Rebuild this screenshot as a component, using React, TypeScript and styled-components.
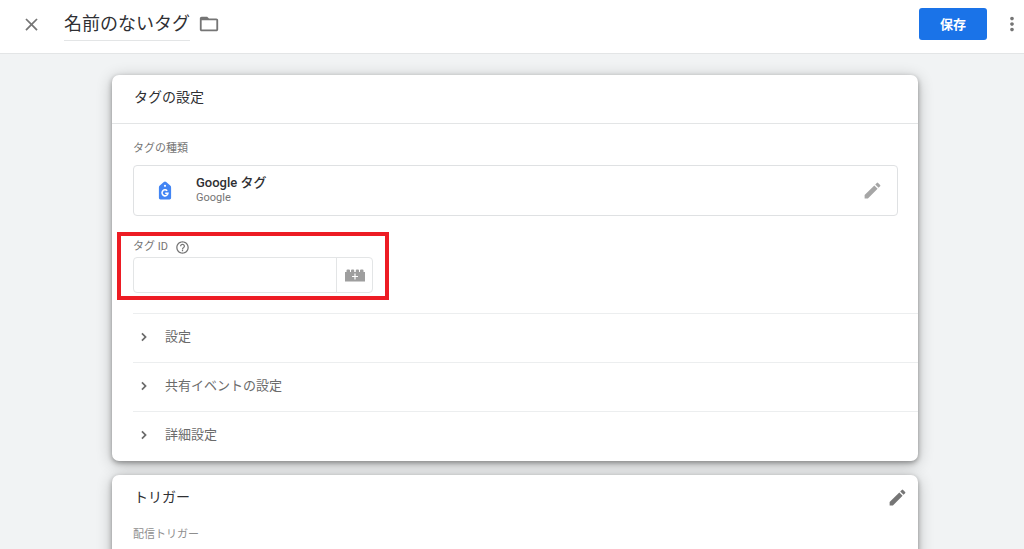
import React from "react";
import styled, { createGlobalStyle } from "styled-components";

const GlobalStyle = createGlobalStyle`
  *, *::before, *::after { box-sizing: border-box; }
  body {
    margin: 0;
    background: #f1f3f4;
    color: #2f3033;
    font-family: Roboto, "Noto Sans CJK JP", sans-serif;
    overflow: hidden;
  }
  h2, p { margin: 0; font-weight: 400; }
  button { font-family: inherit; cursor: pointer; }
  svg { display: block; }
`;

const TopBar = styled.header`
  display: flex;
  align-items: center;
  height: 54px;
  padding: 0 1px 5px 21px;
  background: #fff;
  border-bottom: 1px solid #e3e5e6;
`;

const IconButton = styled.button<{ $tone?: string }>`
  display: flex;
  flex: none;
  padding: 0;
  border: 0;
  background: none;
  color: ${(p) => p.$tone ?? "#757575"};
`;

const TitleInput = styled.input`
  width: 126px;
  height: 34px;
  margin: 0 8px 0 22px;
  padding: 0 0 3px;
  border: 0;
  border-bottom: 1px solid #e3e5e6;
  background: none;
  color: #2f3033;
  font: 400 18px/28px Roboto, "Noto Sans CJK JP", sans-serif;
  outline: none;
`;

const SaveButton = styled.button`
  width: 68px;
  height: 32px;
  margin: 0 14px 0 auto;
  padding: 0 0 2px;
  border: 0;
  border-radius: 3px;
  background: #1a73e8;
  color: #fff;
  font-size: 13px;
  font-weight: 700;
`;

const Main = styled.main`
  display: flex;
  flex-direction: column;
  gap: 14px;
  padding: 21px 106px 0 112px;
`;

const Card = styled.section`
  border-radius: 7px;
  background: #fff;
  box-shadow: 0 2px 5px rgba(0, 0, 0, 0.34), 0 3px 16px rgba(0, 0, 0, 0.24);
`;

const CardHeader = styled.header<{ $divided?: boolean }>`
  display: flex;
  align-items: center;
  justify-content: space-between;
  height: ${(p) => (p.$divided ? 49 : 44)}px;
  padding: ${(p) => (p.$divided ? "0 10px 4px 22px" : "0 10px 0 22px")};
  border-bottom: ${(p) => (p.$divided ? "1px solid #e3e5e6" : "0")};
`;

const CardTitle = styled.h2`
  font-size: 14px;
  line-height: 20px;
`;

const CardBody = styled.div`
  padding: 17px 0 1px 21px;
`;

const Caption = styled.p<{ $pale?: boolean }>`
  font-size: 11px;
  line-height: 16px;
  color: ${(p) => (p.$pale ? "#8e8e8e" : "#757575")};
`;

const TagType = styled.div`
  display: flex;
  align-items: center;
  height: 51px;
  margin: 8px 20px 0 0;
  padding: 0 14px 0 21px;
  border: 1px solid #dfe1e3;
  border-radius: 4px;
`;

const TagName = styled.div`
  flex: 1;
  margin-left: 21px;
`;

const TagNameMain = styled.p`
  && { font-weight: 500; }
  font-size: 13px;
  line-height: 15px;
`;

const Field = styled.div`
  position: relative;
  width: 240px;
  margin: 23px 0 20px;
`;

const Highlight = styled.div`
  position: absolute;
  inset: -7px -16px -7px -16px;
  border: 4px solid #ed1c24;
  pointer-events: none;
`;

const FieldLabel = styled.div`
  display: flex;
  align-items: center;
  gap: 7px;
  height: 16px;
  margin-bottom: 2px;
  font-size: 11px;
  line-height: 16px;
  color: #757575;
`;

const InputGroup = styled.div`
  display: flex;
  height: 36px;
  border: 1px solid #e3e5e6;
  border-radius: 4px;
`;

const TextInput = styled.input`
  flex: 1;
  min-width: 0;
  padding: 0 8px;
  border: 0;
  border-right: 1px solid #e3e5e6;
  background: none;
  font-size: 12px;
  outline: none;
`;

const VariableButton = styled(IconButton)`
  width: 35px;
  align-items: center;
  justify-content: center;
`;

const SectionRow = styled.button`
  display: flex;
  align-items: center;
  gap: 13px;
  width: 100%;
  height: 49px;
  padding: 0 0 3px 3px;
  border: 0;
  border-top: 1px solid #eceeef;
  background: none;
  color: #6b6b6b;
  font-size: 13px;
  line-height: 16px;
  text-align: left;
`;

const CaptionInset = styled.div`
  padding: 8px 21px 24px;
`;

const icons = {
  close: "M19 6.41 17.59 5 12 10.59 6.41 5 5 6.41 10.59 12 5 17.59 6.41 19 12 13.41 17.59 19 19 17.59 13.41 12z",
  folder: "M2 6c0-1.100.9-2 2-2h6l2 2h8c1.100 0 2 .9 2 2v10c0 1.100-.9 2-2 2H4c-1.100 0-2-.9-2-2zM4 8v10h16V8z",
  more: "M12 8c1.100 0 2-.9 2-2s-.9-2-2-2-2 .9-2 2 .9 2 2 2zm0 2c-1.100 0-2 .9-2 2s.9 2 2 2 2-.9 2-2-.9-2-2-2zm0 6c-1.100 0-2 .9-2 2s.9 2 2 2 2-.9 2-2-.9-2-2-2z",
  pencil: "M3 17.250V21h3.750L17.810 9.940l-3.750-3.750L3 17.250zM20.710 7.040a1 1 0 0 0 0-1.410l-2.340-2.340a1 1 0 0 0-1.410 0l-1.830 1.830 3.750 3.750 1.830-1.830z",
  chevron: "M8 16.590 12.590 12 8 7.410 9.800 5.600l6.400 6.400-6.400 6.400z",
  help: "M11 18h2v-2h-2v2zm1-16C6.480 2 2 6.480 2 12s4.480 10 10 10 10-4.480 10-10S17.520 2 12 2zm0 18c-4.410 0-8-3.590-8-8s3.590-8 8-8 8 3.590 8 8-3.590 8-8 8zm0-14c-2.210 0-4 1.790-4 4h2c0-1.100.9-2 2-2s2 .9 2 2c0 2-3 1.750-3 5h2c0-2.250 3-2.500 3-5 0-2.210-1.790-4-4-4z",
};

function Icon({ name, size }: { name: keyof typeof icons; size: number }) {
  return (
    <svg width={size} height={size} viewBox="0 0 24 24" fill="currentColor" fillRule="evenodd" aria-hidden="true">
      <path d={icons[name]} />
    </svg>
  );
}

function GoogleTagIcon() {
  return (
    <svg width="20" height="20" viewBox="0 0 20 20" aria-hidden="true">
      <path d="M8.800 1a1.800 1.800 0 0 1 2.400 0l4 3.600c.6.5.9 1 .9 1.800V16.800c0 1-.6 1.600-1.600 1.600h-9c-1 0-1.600-.6-1.600-1.600V6.400c0-.8.300-1.300.9-1.800z" fill="#4285f4" />
      <circle cx="10" cy="4.800" r="1.100" fill="#fff" />
      <path d="M12.200 9.800A3 3 0 1 0 13 12.200H10.200" fill="none" stroke="#fff" strokeWidth="1.500" />
    </svg>
  );
}

function BrickIcon() {
  return (
    <svg width="20" height="13" viewBox="0 0 20 13" aria-hidden="true">
      <path d="M0 3h1.500V1.500q0-1 1-1h1.500q1 0 1 1V3h1V1.500q0-1 1-1h1.200q1 0 1 1V3h1.600V1.500q0-1 1-1h1.200q1 0 1 1V3h1V1.500q0-1 1-1h1.500q1 0 1 1V3H20v9.500H0z" fill="#9e9e9e" />
      <path d="M10 4.500v6M7 7.500h6" stroke="#fff" strokeWidth="1.200" />
    </svg>
  );
}

export default function App() {
  return (
    <>
      <GlobalStyle />
      <TopBar>
        <IconButton aria-label="閉じる"><Icon name="close" size={21} /></IconButton>
        <TitleInput aria-label="タグ名" defaultValue="名前のないタグ" />
        <IconButton aria-label="フォルダ"><Icon name="folder" size={22} /></IconButton>
        <SaveButton>保存</SaveButton>
        <IconButton aria-label="その他"><Icon name="more" size={22} /></IconButton>
      </TopBar>
      <Main>
        <Card>
          <CardHeader $divided>
            <CardTitle>タグの設定</CardTitle>
          </CardHeader>
          <CardBody>
            <Caption>タグの種類</Caption>
            <TagType>
              <GoogleTagIcon />
              <TagName>
                <TagNameMain>Google タグ</TagNameMain>
                <Caption>Google</Caption>
              </TagName>
              <IconButton aria-label="タグの種類を編集" $tone="#a6a6a6"><Icon name="pencil" size={21} /></IconButton>
            </TagType>
            <Field>
              <FieldLabel>
                <label htmlFor="tag-id">タグ ID</label>
                <IconButton aria-label="ヘルプ"><Icon name="help" size={15} /></IconButton>
              </FieldLabel>
              <InputGroup>
                <TextInput id="tag-id" type="text" />
                <VariableButton aria-label="変数を選択"><BrickIcon /></VariableButton>
              </InputGroup>
              <Highlight />
            </Field>
            {["設定", "共有イベントの設定", "詳細設定"].map((label) => (
              <SectionRow key={label} aria-expanded={false}>
                <Icon name="chevron" size={16} />
                {label}
              </SectionRow>
            ))}
          </CardBody>
        </Card>
        <Card>
          <CardHeader>
            <CardTitle>トリガー</CardTitle>
            <IconButton aria-label="トリガーを編集"><Icon name="pencil" size={21} /></IconButton>
          </CardHeader>
          <CaptionInset><Caption $pale>配信トリガー</Caption></CaptionInset>
        </Card>
      </Main>
    </>
  );
}
